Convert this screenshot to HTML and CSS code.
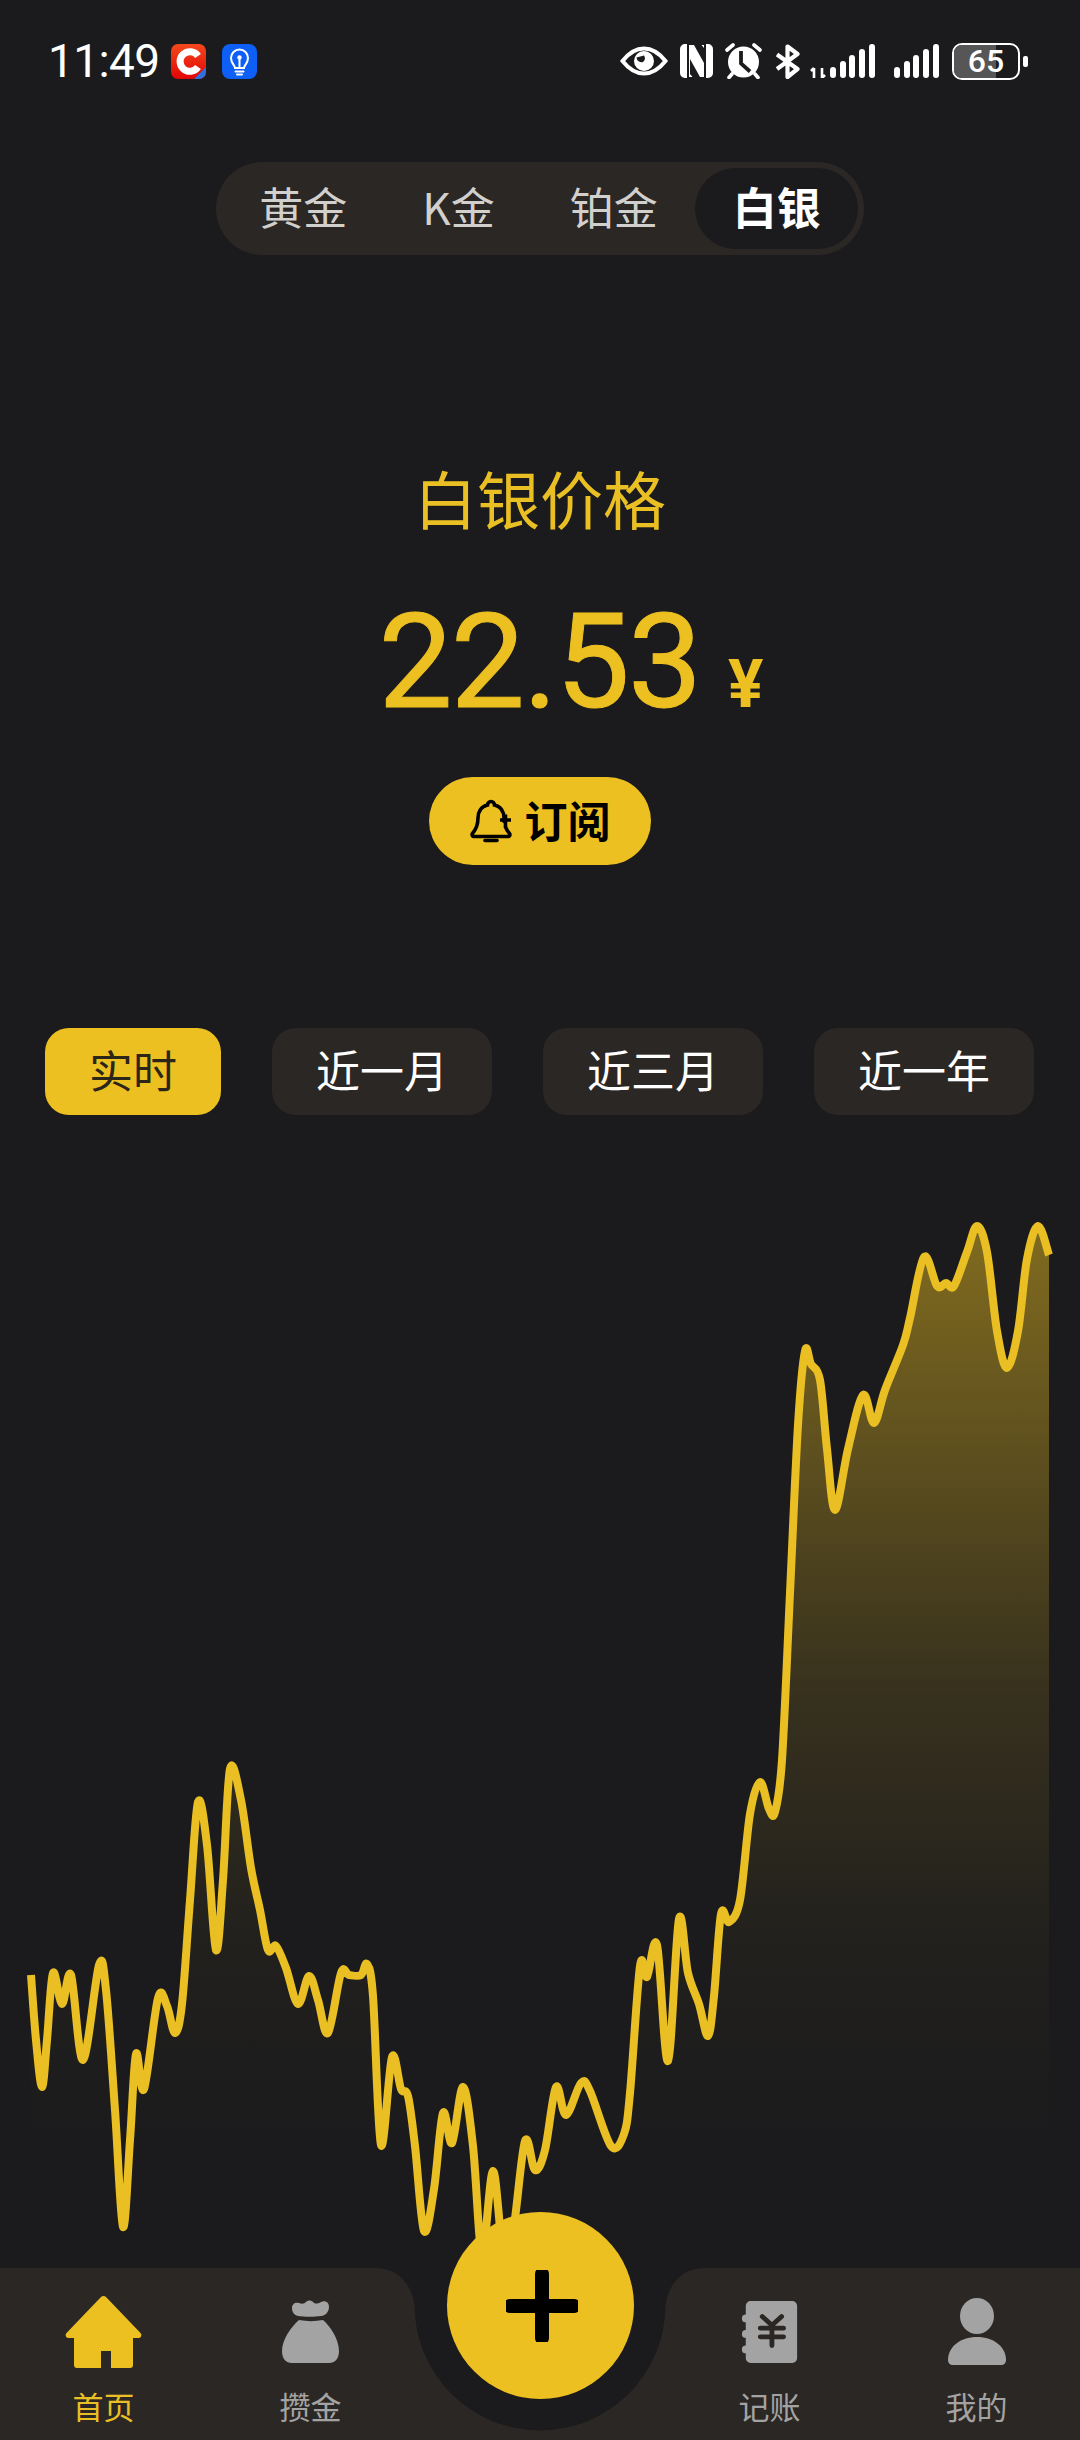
FILE: index.html
```html
<!DOCTYPE html>
<html lang="zh-CN">
<head>
    <meta charset="UTF-8">
    <meta name="viewport" content="width=device-width, initial-scale=1.0">
    <title>白银价格</title>
    <link rel="stylesheet" href="styles.css">
</head>
<body>
    <div class="screen">
        <!-- Status bar -->
        <div class="status-bar">
            <div class="status-left">
                <span class="clock">11:49</span>
                <svg class="app-icon" viewBox="0 0 35 35">
                    <defs>
                        <linearGradient id="redIcon" x1="0" y1="0" x2="0" y2="1">
                            <stop offset="0" stop-color="#f4481c"/>
                            <stop offset="1" stop-color="#e10505"/>
                        </linearGradient>
                    </defs>
                    <rect width="35" height="35" rx="7" fill="url(#redIcon)"/>
                    <path d="M35 23V28a7 7 0 0 1-7 7H23Z" fill="#2f6fe0"/>
                    <path d="M27 12a9.800 9.800 0 1 0 0 11" fill="none" stroke="#fff" stroke-width="7"/>
                </svg>
                <svg class="app-icon app-icon-blue" viewBox="0 0 35 35">
                    <rect width="35" height="35" rx="8" fill="#0e5ff5"/>
                    <path d="M13 24c0-3-4-4.500-4-10a8.500 8.500 0 0 1 17 0c0 5.500-4 7-4 10Z" fill="none" stroke="#fff" stroke-width="2"/>
                    <path d="M13.500 27.500h8M15 30.500h5M17.500 24v-9" fill="none" stroke="#fff" stroke-width="2" stroke-linecap="round"/>
                    <circle cx="17.500" cy="13.500" r="2.200" fill="#fff"/>
                </svg>
            </div>
            <div class="status-right">
                <svg class="ic-eye" viewBox="0 0 48 30">
                    <path d="M2.500 15C10 5.500 17 2.500 24 2.500S38 5.500 45.500 15C38 24.500 31 27.500 24 27.500S10 24.500 2.500 15Z" fill="none" stroke="#fff" stroke-width="4"/>
                    <circle cx="24" cy="15" r="10" fill="#fff"/>
                    <path d="M16.500 11.500a5 5 0 0 0 6.500 4.500 5 5 0 0 0 1-6.500" fill="#1b1b1d"/>
                </svg>
                <svg class="ic-nfc" viewBox="0 0 33 34">
                    <path d="M5 0h2v34H5a5 5 0 0 1-5-5V5a5 5 0 0 1 5-5ZM26 0h2a5 5 0 0 1 5 5v24a5 5 0 0 1-5 5h-2Z" fill="#fff"/>
                    <path d="M9 1h5l10 18V4l-2.500-3H24v32h-4L10 15v15l2.500 3H9Z" fill="#fff"/>
                </svg>
                <svg class="ic-alarm" viewBox="0 0 37 36">
                    <circle cx="18.500" cy="19" r="15.500" fill="#fff"/>
                    <path d="M16 8v12.500l9 8" fill="none" stroke="#1b1b1d" stroke-width="3.800"/>
                    <path d="M2 7l6-5M35 7l-6-5M7 31l-3 3.500M30 31l3 3.500" fill="none" stroke="#fff" stroke-width="3.600" stroke-linecap="round"/>
                </svg>
                <svg class="ic-bt" viewBox="0 0 25 35">
                    <path d="M2 10.500l20.500 14.500-10 8V2.500l10 7.500L2 25" fill="none" stroke="#fff" stroke-width="4.200" stroke-linejoin="round"/>
                </svg>
                <svg class="ic-signal-a" viewBox="0 0 66 34">
                    <path d="M4 24v10M1 27l3-3M12 24v10M15 31l-3 3" fill="none" stroke="#fff" stroke-width="2.600"/>
                    <rect x="20" y="23" width="6" height="11" rx="3" fill="#fff"/>
                    <rect x="30" y="17" width="6" height="17" rx="3" fill="#fff"/>
                    <rect x="39" y="11" width="6" height="23" rx="3" fill="#fff"/>
                    <rect x="49" y="5" width="6" height="29" rx="3" fill="#fff"/>
                    <rect x="59" y="0" width="6" height="34" rx="3" fill="#fff"/>
                </svg>
                <svg class="ic-signal-b" viewBox="0 0 45 34">
                    <rect x="0" y="23" width="6" height="11" rx="3" fill="#fff"/>
                    <rect x="10" y="17" width="6" height="17" rx="3" fill="#fff"/>
                    <rect x="19" y="11" width="6" height="23" rx="3" fill="#fff"/>
                    <rect x="29" y="5" width="6" height="29" rx="3" fill="#fff"/>
                    <rect x="39" y="0" width="6" height="34" rx="3" fill="#fff"/>
                </svg>
                <div class="battery">
                    <div class="battery-body">
                        <div class="battery-level"></div>
                        <span class="battery-text">65</span>
                    </div>
                    <div class="battery-nub"></div>
                </div>
            </div>
        </div>

        <!-- Metal tabs -->
        <div class="metal-tabs">
            <span class="metal-tab">黄金</span>
            <span class="metal-tab">K金</span>
            <span class="metal-tab">铂金</span>
            <span class="metal-tab active">白银</span>
        </div>

        <!-- Price -->
        <div class="price-title">白银价格</div>
        <div class="price-row">
            <span class="price-value">22.53</span>
            <span class="price-unit">¥</span>
        </div>
        <button class="subscribe-btn">
            <svg class="bell" viewBox="0 0 42 44">
                <path d="M21 2.500a3.500 3.500 0 0 1 3.500 3.500C31 7.500 34 13 34 19v3.500M8 19c0-6 3-11.500 9.500-13A3.500 3.500 0 0 1 21 2.500M8 19c0 8-2.500 12-5.500 15.500-1 1.500 0 3 1.500 3h34c1.500 0 2.500-1.500 1.500-3-1.500-1.800-3-3.800-4-6.500" fill="none" stroke="#000" stroke-width="3.600" stroke-linecap="round"/>
                <path d="M15 41.500h12" fill="none" stroke="#000" stroke-width="3.600" stroke-linecap="round"/>
                <path d="M30 21h11M35.500 15.500v12" fill="none" stroke="#000" stroke-width="3.600"/>
            </svg>
            <span>订阅</span>
        </button>

        <!-- Period selector -->
        <div class="period-row">
            <span class="period active">实时</span>
            <span class="period">近一月</span>
            <span class="period">近三月</span>
            <span class="period">近一年</span>
        </div>

        <!-- Price chart, viewBox uses page coordinates -->
        <svg class="chart" id="chart" viewBox="0 1200 1080 1068">
            <defs>
                <linearGradient id="chartFill" gradientUnits="userSpaceOnUse" x1="0" y1="1226" x2="0" y2="2150">
                    <stop offset="0" stop-color="#edc021" stop-opacity=".48"/>
                    <stop offset=".07" stop-color="#edc021" stop-opacity=".44"/>
                    <stop offset=".51" stop-color="#edc021" stop-opacity=".13"/>
                    <stop offset=".78" stop-color="#edc021" stop-opacity=".03"/>
                    <stop offset="1" stop-color="#edc021" stop-opacity="0"/>
                </linearGradient>
            </defs>
            <path id="chartArea" fill="url(#chartFill)"/>
            <path id="chartLine" fill="none" stroke="#e9bf24" stroke-width="8"/>
        </svg>

        <!-- Bottom nav -->
        <nav class="bottom-nav">
            <svg class="nav-bg" viewBox="0 0 1080 172">
                <path d="M0 0H374C398 0 411 15 414.500 37A125.500 125.500 0 0 0 665.500 37C669 15 682 0 706 0H1080V172H0Z" fill="#2b2724"/>
            </svg>
            <div class="nav-item active">
                <svg class="nav-icon" viewBox="0 0 77 72">
                    <path d="M38.500 0c1 0 1.800.4 2.500 1.100L75.500 37c1.800 2 .6 5-2 5H68v27a3 3 0 0 1-3 3H46V55H36v17H12a3 3 0 0 1-3-3V42H3.500c-2.600 0-3.800-3-2-5L36 1.100c.7-.7 1.500-1.100 2.500-1.100Z" fill="#edc021"/>
                </svg>
                <span>首页</span>
            </div>
            <div class="nav-item">
                <svg class="nav-icon" viewBox="0 0 57 64">
                    <path d="M10 8c0-4 3-6 7-5 3 1 5 1 7-1 2-2 5-2 7 0 2 2 5 2 8 0 4-2 8 0 8 5 0 5-4 9-8 9-6 1-17 1-23 0-4-1-6-4-6-8Z" fill="#a3a3a3"/>
                    <path d="M17 20c8 1.500 16 1.500 24 0 7 6 16 19 16 31 0 8-4 12-10 12H10C4 63 0 59 0 51c0-12 10-25 17-31Z" fill="#a3a3a3"/>
                </svg>
                <span>攒金</span>
            </div>
            <div class="nav-spacer"></div>
            <div class="nav-item">
                <svg class="nav-icon" viewBox="0 0 57 64">
                    <path d="M4 5a5 5 0 0 1 5-5h43a5 5 0 0 1 5 5v54a5 5 0 0 1-5 5H9a5 5 0 0 1-5-5v-5a4 4 0 0 1 0-8v-8a4 4 0 0 1 0-8v-8a4 4 0 0 1 0-8Z" fill="#a3a3a3"/>
                    <path d="M21 16l10 9 10-9M19 28h24M19 37h24M31 25v21" fill="none" stroke="#2b2724" stroke-width="5" stroke-linecap="round" stroke-linejoin="round"/>
                </svg>
                <span>记账</span>
            </div>
            <div class="nav-item">
                <svg class="nav-icon" viewBox="0 0 58 67">
                    <ellipse cx="29" cy="18" rx="17" ry="18" fill="#a3a3a3"/>
                    <path d="M29 39c17 0 29 10 29 23 0 3-2 5-5 5H5c-3 0-5-2-5-5 0-13 12-23 29-23Z" fill="#a3a3a3"/>
                </svg>
                <span>我的</span>
            </div>
            <button class="fab">
                <svg viewBox="0 0 72 72">
                    <path d="M4 36h64M36 4v64" fill="none" stroke="#000" stroke-width="14" stroke-linecap="round"/>
                </svg>
            </button>
        </nav>
    </div>

    <script src="chart.js"></script>
</body>
</html>
```
FILE: styles.css
```css
* {
    box-sizing: border-box;
}

body {
    margin: 0;
    background: #1b1b1d;
    font-family: "Noto Sans CJK SC", "Noto Sans", sans-serif;
}

.screen {
    width: 1080px;
    height: 2440px;
    overflow: hidden;
    display: flex;
    flex-direction: column;
    align-items: center;
}

/* Status bar */
.status-bar {
    width: 100%;
    height: 124px;
    padding: 42px 52px 0 48px;
    display: flex;
    justify-content: space-between;
    align-items: flex-start;
}

.status-left {
    display: flex;
    align-items: center;
    height: 38px;
}

.clock {
    font-family: Roboto, sans-serif;
    font-size: 46px;
    line-height: 38px;
    color: #fff;
    letter-spacing: -0.6px;
    margin-right: 11px;
}

.app-icon {
    width: 35px;
    height: 35px;
}

.app-icon-blue {
    margin-left: 16px;
}

.status-right {
    display: flex;
    align-items: center;
    height: 38px;
}

.ic-eye {
    width: 48px;
    height: 30px;
    margin-right: 12px;
}

.ic-nfc {
    width: 33px;
    height: 34px;
    margin-right: 12px;
}

.ic-alarm {
    width: 37px;
    height: 36px;
    margin-right: 13px;
}

.ic-bt {
    width: 25px;
    height: 35px;
    margin-right: 10px;
}

.ic-signal-a {
    width: 66px;
    height: 34px;
    margin-right: 18px;
}

.ic-signal-b {
    width: 45px;
    height: 34px;
    margin-right: 13px;
}

.battery {
    display: flex;
    align-items: center;
}

.battery-body {
    position: relative;
    width: 68px;
    height: 37px;
    border: 2.5px solid #fff;
    border-radius: 10px;
    overflow: hidden;
    display: flex;
    align-items: center;
    justify-content: center;
}

.battery-level {
    position: absolute;
    left: 0;
    top: 0;
    bottom: 0;
    width: 65%;
    background: #565656;
}

.battery-text {
    position: relative;
    font-family: Roboto, sans-serif;
    font-size: 32px;
    font-weight: 500;
    line-height: 1;
    color: #fff;
}

.battery-nub {
    width: 5px;
    height: 11px;
    margin-left: 3px;
    border-radius: 2px;
    background: #fff;
}

/* Metal tabs */
.metal-tabs {
    margin-top: 38px;
    height: 93px;
    padding: 6px;
    display: flex;
    border-radius: 47px;
    background: #2b2724;
}

.metal-tab {
    padding: 0 37.5px 6px;
    display: flex;
    align-items: center;
    border-radius: 41px;
    font-size: 44px;
    color: #d2d0cd;
}

.metal-tab.active {
    background: #1b1b1d;
    color: #fff;
    font-weight: 700;
}

/* Price */
.price-title {
    margin-top: 197px;
    font-size: 63px;
    line-height: 90px;
    color: #e9bf24;
}

.price-row {
    margin-top: 55px;
    padding-left: 62px;
    height: 130px;
    display: flex;
    align-items: flex-end;
    color: #edc021;
}

.price-value {
    font-family: Roboto, sans-serif;
    font-size: 132px;
    line-height: 130px;
    letter-spacing: -2px;
    -webkit-text-stroke: 1px #edc021;
}

.price-unit {
    margin-left: 28px;
    margin-bottom: 2px;
    font-family: Roboto, sans-serif;
    font-size: 66px;
    font-weight: 700;
    line-height: 80px;
}

.subscribe-btn {
    margin-top: 50px;
    width: 222px;
    height: 88px;
    padding: 0 0 5px;
    border: none;
    border-radius: 44px;
    background: #edc021;
    display: flex;
    align-items: center;
    justify-content: center;
    gap: 13px;
    font-family: inherit;
    font-size: 43px;
    font-weight: 700;
    color: #000;
}

.bell {
    width: 42px;
    height: 44px;
    margin-top: 5px;
}

/* Period selector */
.period-row {
    margin-top: 163px;
    width: 100%;
    padding: 0 46px 0 45px;
    display: flex;
    justify-content: space-between;
}

.period {
    height: 87px;
    padding: 0 44px 6px;
    display: flex;
    align-items: center;
    border-radius: 24px;
    background: #2b2724;
    font-size: 44px;
    color: #fff;
}

.period.active {
    background: #edc021;
    color: #2b2618;
}

/* Chart */
.chart {
    display: block;
    flex-shrink: 0;
    margin-top: 85px;
    width: 1080px;
    height: 1068px;
}

/* Bottom nav */
.bottom-nav {
    position: relative;
    width: 100%;
    height: 172px;
    flex-shrink: 0;
    display: flex;
}

.nav-bg {
    position: absolute;
    left: 0;
    top: 0;
    width: 1080px;
    height: 172px;
}

.nav-item {
    position: relative;
    height: 172px;
    display: flex;
    flex-direction: column;
    align-items: center;
    font-size: 31px;
    line-height: 44px;
    color: #a3a3a3;
    width: 207px;
}

.nav-item.active {
    color: #e9bf24;
}

.nav-item span {
    position: absolute;
    top: 116px;
}

.nav-spacer {
    width: 252px;
}

.nav-icon {
    position: absolute;
    top: 32px;
}

.nav-item:nth-child(2) .nav-icon {
    top: 28px;
    width: 77px;
    height: 72px;
}

.nav-item:nth-child(3) .nav-icon {
    width: 57px;
    height: 64px;
}

.nav-item:nth-child(5) .nav-icon {
    top: 33px;
    width: 57px;
    height: 62px;
}

.nav-item:nth-child(6) .nav-icon {
    top: 30px;
    width: 58px;
    height: 67px;
}

.fab {
    position: absolute;
    left: 447px;
    top: -56px;
    width: 187px;
    height: 187px;
    padding: 0 0 0 3px;
    border: none;
    border-radius: 50%;
    background: #edc021;
    display: flex;
    align-items: center;
    justify-content: center;
}

.fab svg {
    width: 72px;
    height: 72px;
}
```
FILE: chart.js
```js
// Price points, x / y in page pixels
const points = [
    [31, 1975], [36, 2040], [42, 2087], [47, 2040], [53, 1973], [62, 2004], [71, 1975], [83, 2060],
    [99, 1965], [106, 1990], [115, 2110], [123, 2227], [130, 2140], [136, 2054], [144, 2089], [158, 1998],
    [167, 2006], [175, 2033], [182, 2004], [190, 1900], [198, 1802], [207, 1845], [216, 1950], [223, 1880],
    [230, 1769], [241, 1800], [251, 1868], [260, 1910], [268, 1950], [276, 1946], [286, 1968], [298, 2004],
    [309, 1976], [318, 2000], [328, 2033], [341, 1973], [349, 1975], [361, 1975], [367, 1964], [373, 1996],
    [381, 2145], [392, 2057], [401, 2089], [408, 2096], [415, 2146], [424, 2231], [434, 2189], [443, 2113],
    [452, 2143], [463, 2087], [473, 2146], [482, 2253], [493, 2171], [503, 2250], [513, 2232], [525, 2141],
    [535, 2170], [545, 2150], [556, 2087], [566, 2115], [581, 2083], [590, 2091], [611, 2146], [624, 2134],
    [630, 2093], [640, 1966], [647, 1977], [657, 1945], [668, 2061], [679, 1919], [688, 1973], [699, 2004],
    [708, 2036], [714, 1996], [721, 1914], [729, 1922], [740, 1900], [750, 1814], [760, 1782], [769, 1809],
    [775, 1812], [782, 1760], [790, 1593], [798, 1425], [805, 1351], [811, 1364], [820, 1380], [827, 1449],
    [835, 1510], [848, 1449], [863, 1395], [874, 1423], [885, 1390], [903, 1345], [910, 1318], [924, 1257],
    [937, 1286], [946, 1283], [954, 1286], [967, 1252], [977, 1226], [987, 1252], [997, 1331], [1007, 1368],
    [1018, 1331], [1027, 1259], [1038, 1226], [1049, 1255]
];

// Catmull-Rom through the points, as cubic beziers
function smoothPath(pts) {
    let d = `M${pts[0][0]} ${pts[0][1]}`;
    for (let i = 0; i < pts.length - 1; i++) {
        const p0 = pts[i - 1] || pts[i];
        const p1 = pts[i];
        const p2 = pts[i + 1];
        const p3 = pts[i + 2] || p2;
        const c1x = p1[0] + (p2[0] - p0[0]) / 6;
        const c1y = p1[1] + (p2[1] - p0[1]) / 6;
        const c2x = p2[0] - (p3[0] - p1[0]) / 6;
        const c2y = p2[1] - (p3[1] - p1[1]) / 6;
        d += `C${c1x} ${c1y} ${c2x} ${c2y} ${p2[0]} ${p2[1]}`;
    }
    return d;
}

const line = smoothPath(points);
document.getElementById('chartLine').setAttribute('d', line);
document.getElementById('chartArea').setAttribute('d', `${line}V2268H31Z`);
```
